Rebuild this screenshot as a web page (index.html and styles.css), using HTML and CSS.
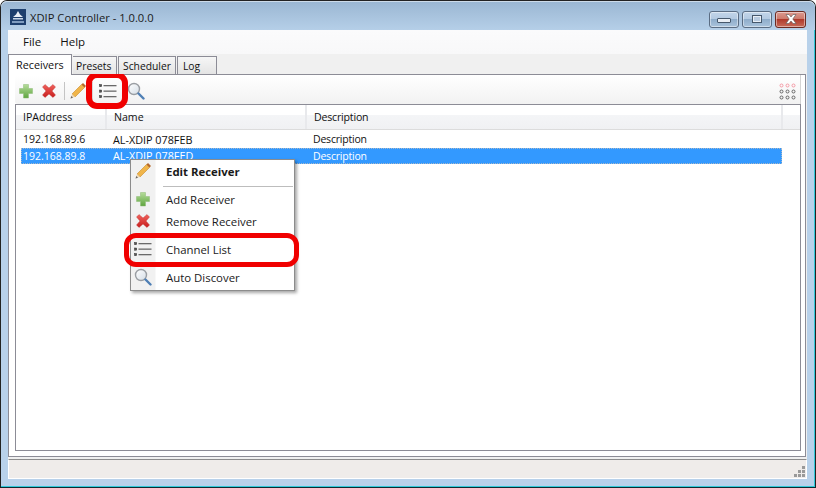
FILE: index.html
```html
<!DOCTYPE html>
<html lang="en">
<head>
<meta charset="utf-8">
<title>XDIP Controller</title>
<link rel="stylesheet" href="styles.css">
</head>
<body>
<div class="window">
  <div class="titlebar">
    <svg class="appicon" viewBox="0 0 16 16"><rect width="16" height="16" fill="#1d3f6e"/><path d="M8 2l2 3.500 3 2.500H3l3-2.500z" fill="#e8eef6"/><rect x="3" y="9" width="10" height="1.500" fill="#c8d6e8"/><rect x="2" y="12" width="12" height="2" fill="#7f9cc0"/></svg>
    <span class="title">XDIP Controller - 1.0.0.0</span>
    <div class="caption">
      <div class="capbtn"><span class="min-glyph"></span></div>
      <div class="capbtn"><span class="max-glyph"></span></div>
      <div class="capbtn close"><svg width="18" height="12" viewBox="0 0 18 12"><path d="M4 1.500h3l2 2.500 2-2.500h3L10.800 6 14 10.500h-3L9 8l-2 2.500H4L7.200 6z" fill="#fff" stroke="#555" stroke-width=".6"/></svg></div>
    </div>
  </div>
  <div class="client">
    <div class="menubar"><span class="menuitem">File</span><span class="menuitem">Help</span></div>
    <div class="tabstrip">
      <div class="tab active">Receivers</div>
      <div class="tab t-presets">Presets</div>
      <div class="tab t-sched">Scheduler</div>
      <div class="tab t-log">Log</div>
    </div>
    <div class="tabpage">
      <div class="toolbar">
        <svg class="ti plus" viewBox="0 0 16 16"><use href="#plus"/></svg>
        <svg class="ti x" viewBox="0 0 16 16"><use href="#cross"/></svg>
        <span class="tsep"></span>
        <svg class="ti pen" viewBox="0 0 18 18"><use href="#pencil"/></svg>
        <span class="tsep second"></span>
        <svg class="ti list" viewBox="0 0 18 16"><use href="#listi"/></svg>
        <svg class="ti mag" viewBox="0 0 18 18"><use href="#magn"/></svg>
        <span class="grow"></span>
        <svg class="dots" viewBox="0 0 17 17">
          <g fill="none" stroke="#f59aa5" stroke-width="1"><circle cx="2.500" cy="2.500" r="1.500"/><circle cx="8.500" cy="2.500" r="1.500"/><circle cx="14.500" cy="2.500" r="1.500"/></g>
          <g fill="none" stroke="#666" stroke-width="1"><circle cx="2.500" cy="8.500" r="1.500"/><circle cx="8.500" cy="8.500" r="1.500"/><circle cx="14.500" cy="8.500" r="1.500"/><circle cx="2.500" cy="14.500" r="1.500"/><circle cx="8.500" cy="14.500" r="1.500"/><circle cx="14.500" cy="14.500" r="1.500"/></g>
        </svg>
      </div>
      <div class="list-view">
        <div class="lhead">
          <div class="hc c1">IPAddress</div>
          <div class="hc c2">Name</div>
          <div class="hc c3">Description</div>
          <div class="hc c4"></div>
        </div>
        <div class="lrow first"><span class="c1">192.168.89.6</span><span class="c2">AL-XDIP 078FEB</span><span class="c3">Description</span></div>
        <div class="lrow sel"><span class="c1">192.168.89.8</span><span class="c2">AL-XDIP 078FED</span><span class="c3">Description</span></div>
      </div>
    </div>
    <div class="statusbar"><svg class="grip" viewBox="0 0 12 12"><path d="M8 0h3v3H8zM4 4h3v3H4zM8 4h3v3H8zM0 8h3v3H0zM4 8h3v3H4zM8 8h3v3H8z" fill="#999"/></svg></div>
  </div>

  <div class="ctx">
    <div class="ci strong"><span class="cicon"><svg width="18" height="18" viewBox="0 0 18 18"><use href="#pencil"/></svg></span><span>Edit Receiver</span></div>
    <div class="csep"></div>
    <div class="ci"><span class="cicon"><svg width="16" height="16" viewBox="0 0 16 16"><use href="#plus"/></svg></span><span>Add Receiver</span></div>
    <div class="ci"><span class="cicon"><svg width="16" height="16" viewBox="0 0 16 16"><use href="#cross"/></svg></span><span>Remove Receiver</span></div>
    <div class="ci gap"><span class="cicon"><svg width="18" height="16" viewBox="0 0 18 16"><use href="#listi"/></svg></span><span>Channel List</span></div>
    <div class="ci last"><span class="cicon"><svg width="18" height="18" viewBox="0 0 18 18"><use href="#magn"/></svg></span><span>Auto Discover</span></div>
  </div>
  <div class="mark mark-tool"></div>
  <div class="mark mark-menu"></div>
</div>

<svg class="defs" width="0" height="0">
  <defs>
    <linearGradient id="gp" x1="0" y1="0" x2="0" y2="1"><stop offset="0" stop-color="#b5dc9a"/><stop offset="1" stop-color="#5fa53f"/></linearGradient>
    <linearGradient id="gx" x1="0" y1="0" x2="0" y2="1"><stop offset="0" stop-color="#f0625c"/><stop offset="1" stop-color="#c81e1e"/></linearGradient>
    <linearGradient id="gl" x1="0" y1="0" x2="1" y2="1"><stop offset="0" stop-color="#ffffff"/><stop offset="1" stop-color="#d4dde6"/></linearGradient>
    <symbol id="plus" viewBox="0 0 16 16"><path d="M5.500 1.500h5v4h4v5h-4v4.500h-5v-4.500h-4v-5h4z" fill="url(#gp)" stroke="#8dbb74" stroke-width=".5"/></symbol>
    <symbol id="cross" viewBox="0 0 16 16"><path d="M1.500 4L4 1.500 8 5l4-3.500L14.500 4 11 8l3.500 4-2.500 2.500L8 11l-4 3.500L1.500 12 5 8z" fill="url(#gx)" stroke="#b33" stroke-width=".4"/></symbol>
    <symbol id="pencil" viewBox="0 0 18 18"><path d="M12.500 2.500l3 3L6 15l-3-3z" fill="#f0b54a" stroke="#c98a28" stroke-width=".6"/><path d="M12.500 2.500l1.500-1.500 3 3-1.500 1.500z" fill="#b5682a"/><path d="M3 12l3 3-4.500 1.500z" fill="#eed9b8"/><path d="M1.500 16.500L2.300 14l1.700 1.700z" fill="#666"/></symbol>
    <symbol id="listi" viewBox="0 0 18 16"><g fill="#6a6a6a"><rect x="4.500" y="2" width="13" height="1.300"/><rect x="4.500" y="7.500" width="13" height="1.300"/><rect x="4.500" y="13" width="13" height="1.300"/></g><g fill="#555" stroke="#333" stroke-width=".5"><rect x=".5" y="1.500" width="2.200" height="2.200"/><rect x=".5" y="7" width="2.200" height="2.200"/><rect x=".5" y="12.500" width="2.200" height="2.200"/></g></symbol>
    <symbol id="magn" viewBox="0 0 18 18"><circle cx="7" cy="7" r="5.500" fill="url(#gl)" stroke="#9a9ea3" stroke-width="1.400"/><path d="M11.500 11.500l5 5" stroke="#4f7fb5" stroke-width="2.400" stroke-linecap="round"/></symbol>
  </defs>
</svg>
</body>
</html>
```
FILE: styles.css
```css
html, body { margin: 0; padding: 0; }
body { width: 816px; height: 488px; overflow: hidden; background: #fff; font-family: "Open Sans", "Liberation Sans", sans-serif; font-size: 11px; color: #111; }
.defs { display: block; position: absolute; }
.window { position: relative; box-sizing: border-box; width: 816px; height: 488px; display: flex; flex-direction: column; padding: 0 8px 8px 7px; border: 1px solid #222; border-bottom-color: #0c2a33; border-radius: 7px 7px 0 0; background: #b8d1ea; box-shadow: inset -1px -1px 0 #30c8d8; }
.titlebar { height: 29px; flex: none; display: flex; align-items: center; margin: 0 -8px 0 -7px; padding: 0 9px; border-radius: 6px 6px 0 0; background: linear-gradient(#9ab6d2, #b5cfe8); box-shadow: inset 0 1px 0 rgba(255,255,255,.5); }
.appicon { width: 16px; height: 16px; margin: 2px 4px 0 0; flex: none; }
.title { font-size: 11.200px; color: #1a1a1a; margin-top: 4px; }
.caption { margin-left: auto; display: flex; gap: 3px; margin-top: 7px; }
.capbtn { width: 30px; height: 17px; box-sizing: border-box; border: 1px solid #5a6c82; border-radius: 3px; background: linear-gradient(#c2d5e9 0, #b4cae1 45%, #8fadca 50%, #a9c3dc 100%); box-shadow: inset 0 0 0 1px rgba(255,255,255,.45); display: flex; align-items: center; justify-content: center; }
.capbtn.close { width: 31px; border-color: #6b2a22; background: linear-gradient(#dc9a90 0, #cd7a6c 45%, #b03a2c 50%, #c66a58 100%); }
.min-glyph { width: 12px; height: 3px; margin-top: 3px; background: #e8eef5; border: 1px solid #46586c; border-radius: 1px; }
.max-glyph { width: 8px; height: 6px; background: #b8cbe0; border: 1px solid #46586c; outline: 1px solid #e8eef5; outline-offset: -2px; }
.client { flex: 1; min-height: 0; display: flex; flex-direction: column; background: #f0f0f0; }
.menubar { height: 24px; flex: none; box-sizing: border-box; padding: 0 0 2px 15px; display: flex; align-items: center; gap: 19px; background: linear-gradient(#fbfbfc, #f8f8f9); }
.menuitem { font-size: 11.500px; }
.tabstrip { height: 20px; flex: none; display: flex; align-items: flex-end; gap: 1px; background: #f0f0f0; position: relative; z-index: 1; }
.tab { height: 18px; box-sizing: border-box; padding: 1px 0 0 3px; font-size: 10.300px; line-height: 16px; border: 1px solid #8c8c96; border-bottom: none; background: linear-gradient(#f6f6f6, #e4e4e4); }
.tab.active { height: 21px; width: 64px; padding: 2px 0 0 7px; font-size: 10.800px; background: #fff; margin-bottom: -1px; }
.t-presets { width: 44px; border-left: none; padding-left: 3px; }
.t-sched { width: 58px; padding-left: 4px; }
.t-log { width: 40px; padding-left: 5px; }
.tabpage { flex: 1; min-height: 0; box-sizing: border-box; margin: 0 1px 2px 0; border: 1px solid #8c8c96; background: #fff; padding: 0 4px 5px 6px; display: flex; flex-direction: column; }
.toolbar { height: 29px; flex: none; box-sizing: border-box; padding-top: 3px; display: flex; align-items: center; background: linear-gradient(#ffffff, #f2f2f2); border-right: 1px solid #d4d4d4; border-radius: 3px 0 0 3px; }
.ti { width: 16px; height: 16px; flex: none; }
.ti.plus { margin-left: 3px; }
.ti.x { margin-left: 7px; }
.tsep { width: 1px; height: 18px; background: #c4c4c4; margin-left: 7px; flex: none; }
.ti.pen { width: 18px; height: 18px; margin-left: 4px; }
.tsep.second { margin-left: 5px; background: #d6d6d6; }
.ti.list { width: 18px; height: 16px; margin-left: 6px; }
.ti.mag { width: 18px; height: 18px; margin-left: 10px; }
.grow { flex: 1; }
.dots { width: 17px; height: 17px; margin-right: 4px; }
.list-view { flex: 1; min-height: 0; border: 1px solid #8c8c96; background: #fff; }
.lhead { height: 25px; display: flex; background: linear-gradient(#fff 0, #fff 40%, #f4f5f7 42%, #f0f1f3 100%); border-bottom: 1px solid #dcdcdc; box-sizing: border-box; }
.hc { box-sizing: border-box; font-size: 10.600px; line-height: 25px; padding-left: 7px; border-right: 2px solid #e8e9ec; }
.hc.c1 { width: 91px; }
.hc.c2 { width: 200px; }
.hc.c3 { width: 476px; letter-spacing: -.2px; }
.c1, .c2, .c3 { flex: none; }
.hc.c4 { flex: 1; border-right: none; }
.lrow { display: flex; height: 17px; margin-left: 5px; width: 761px; line-height: 17px; }
.lrow.first { margin-top: 1px; }
.lrow.sel { height: 16px; line-height: 16px; }
.lrow .c1 { box-sizing: border-box; width: 92px; padding-left: 2px; font-size: 10.500px; }
.lrow .c2 { width: 200px; font-size: 10.800px; }
.lrow .c3 { font-size: 10.500px; letter-spacing: -.2px; }
.lrow.sel { background: #3399ff; color: #fff; outline: 1px dotted #a8b8c8; outline-offset: -1px; }
.ctx { position: absolute; left: 129px; top: 158px; width: 165px; height: 132px; box-sizing: border-box; border: 1px solid #8c8c8c; background: linear-gradient(90deg, #f1f1f1 0, #f1f1f1 24px, #fff 25px); box-shadow: 2px 2px 3px rgba(0,0,0,.35); font-size: 11.400px; }
.ci { display: flex; align-items: center; height: 22px; color: #1a1a1a; }
.ci.strong { height: 25px; box-sizing: border-box; padding-bottom: 3px; font-weight: 700; }
.ci.gap { margin-top: 6px; }
.ci.last { margin-top: 6px; }
.cicon { width: 24px; flex: none; margin-right: 11px; display: flex; justify-content: center; align-items: center; }
.csep { height: 1px; background: #bdbdbd; margin: 1px 1px 1px 32px; }
.mark { position: absolute; box-sizing: border-box; border: 6px solid #f00000; background: transparent; }
.mark-tool { left: 85px; top: 71px; width: 42px; height: 37px; border-radius: 11px; }
.mark-menu { left: 123px; top: 232px; width: 175px; height: 34px; border-width: 5px; border-radius: 12px; }
.statusbar { height: 20px; flex: none; box-sizing: border-box; border: 1px solid #fff; border-top: 1px solid #8c8c8c; background: #efecea; display: flex; align-items: flex-end; justify-content: flex-end; }
.grip { width: 12px; height: 12px; }
```
